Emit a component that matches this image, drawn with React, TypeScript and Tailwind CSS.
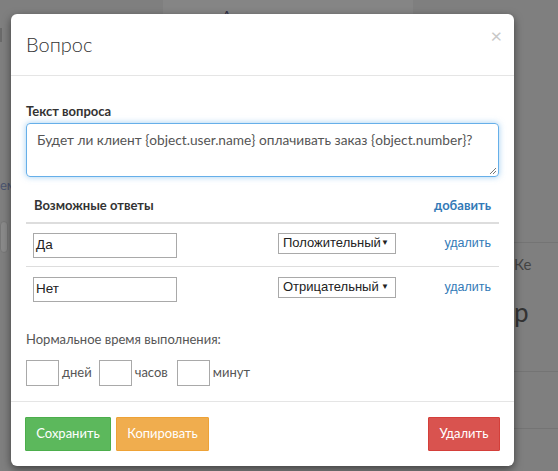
import React from "react";

const sans = { fontFamily: "Lato, 'Open Sans', sans-serif" };
const arial = { fontFamily: "'Liberation Sans', Arial, sans-serif" };

function Caret() {
  return <span className="text-[8px] leading-none text-[#222]">▼</span>;
}

export default function App() {
  return (
    <div className="relative w-[558px] h-[471px] overflow-hidden bg-[#7f7f7f]" style={sans}>
      {/* faint background page behind the overlay */}
      <div className="absolute left-[163px] top-0 w-[250px] h-[14px] bg-[#858585]" />
      <div className="absolute left-[222px] top-[9px] text-[14px] leading-none text-[#333348]">Администратор</div>
      <div className="absolute left-0 top-[28px] w-[2px] h-[14px] bg-[#6a6a6a]" />
      <div className="absolute left-0 top-[176px] text-[13px] text-[#4c5570]">ем</div>
      <div className="absolute left-0 top-[221px] w-[8px] h-[32px] rounded-sm bg-[#8a8a8a] border border-[#777]" />
      <div className="absolute left-[514px] top-[242px] w-[44px] h-px bg-[#747474]" />
      <div className="absolute left-[514px] top-[253px] text-[15px] text-[#444]">Ке</div>
      <div className="absolute left-[514px] top-[299px] text-[26px] leading-none text-[#333]">р</div>
      <div className="absolute left-[514px] top-[371px] w-[44px] h-px bg-[#747474]" />
      <div className="absolute left-[514px] top-[428px] w-[44px] h-px bg-[#747474]" />

      {/* modal */}
      <div className="relative ml-[11px] mt-[14px] w-[503px] rounded-[6px] bg-white shadow-[0_3px_9px_rgba(0,0,0,0.5)]">
        <div className="relative h-[62px] border-b border-[#e5e5e5] px-[15px] pt-[15px]">
          <div className="text-[20px] font-light leading-[30px] text-[#333]">Вопрос</div>
          <div className="absolute right-[12px] top-[11px] text-[20px] leading-none text-[#c8c8c8]">×</div>
        </div>

        <div className="px-[15px] pt-[26px]">
          <div className="text-[13px] font-bold leading-[18px] text-[#333]">Текст вопроса</div>
          <div className="relative mt-[3px] h-[54px] rounded-[4px] border border-[#66afe9] px-[10px] pt-[7px] shadow-[0_0_6px_rgba(102,175,233,0.6)]">
            <div className="text-[13.7px] leading-[18px] text-[#555]">
              Будет ли клиент {"{object.user.name}"} оплачивать заказ {"{object.number}"}?
            </div>
            <svg className="absolute right-[1px] bottom-[1px]" width="8" height="8" viewBox="0 0 8 8">
              <path d="M7 1 L1 7 M7 4 L4 7" stroke="#777" strokeWidth="1" />
            </svg>
          </div>

          <div className="mt-[14px]">
            <div className="flex h-[33px] items-center justify-between border-b-2 border-[#ddd] px-[8px] pb-[2px]">
              <span className="text-[13px] font-bold text-[#333]">Возможные ответы</span>
              <span className="text-[13px] font-bold text-[#337ab7]">добавить</span>
            </div>
            {[
              { v: "Да", t: "Положительный" },
              { v: "Нет", t: "Отрицательный" },
            ].map((r, i) => (
              <div
                key={i}
                className={`flex h-[43px] items-center px-[7px] ${i === 0 ? "border-b border-[#ddd]" : "h-[44px]"}`}
              >
                <div
                  className="flex h-[25px] w-[144px] items-center border border-[#a9a9a9] px-[2px] text-[13.5px] text-[#222]"
                  style={arial}
                >
                  {r.v}
                </div>
                <div
                  className="ml-[101px] mb-[4px] flex h-[21px] w-[118px] items-center justify-between border border-[#a9a9a9] pl-[4px] pr-[6px] text-[13px] text-[#222]"
                  style={arial}
                >
                  <span>{r.t}</span>
                  <Caret />
                </div>
                <span className="ml-auto mb-[4px] mr-[1px] text-[12.5px] text-[#337ab7]" style={arial}>
                  удалить
                </span>
              </div>
            ))}
          </div>

          <div className="mt-[18px] text-[13px] leading-[20px] text-[#555]">Нормальное время выполнения:</div>
          <div className="mt-[11px] flex items-center pb-[15px] text-[13px] text-[#555]">
            <div className="h-[26px] w-[33px] border border-[#a9a9a9]" />
            <span className="ml-[3px]">дней</span>
            <div className="ml-[7px] h-[26px] w-[33px] border border-[#a9a9a9]" />
            <span className="ml-[3px]">часов</span>
            <div className="ml-[9px] h-[26px] w-[33px] border border-[#a9a9a9]" />
            <span className="ml-[3px]">минут</span>
          </div>
        </div>

        <div className="flex items-center border-t border-[#e5e5e5] px-[14px] pt-[15px] pb-[15px]">
          <div className="flex h-[34px] w-[86px] items-center justify-center rounded-[1px] border border-[#4cae4c] bg-[#5cb85c] text-[13px] text-white">
            Сохранить
          </div>
          <div className="ml-[5px] flex h-[34px] w-[93px] items-center justify-center rounded-[1px] border border-[#eea236] bg-[#f0ad4e] text-[13px] text-white">
            Копировать
          </div>
          <div className="ml-auto flex h-[34px] w-[72px] items-center justify-center rounded-[1px] border border-[#d43f3a] bg-[#d9534f] text-[13px] text-white">
            Удалить
          </div>
        </div>
      </div>
    </div>
  );
}
